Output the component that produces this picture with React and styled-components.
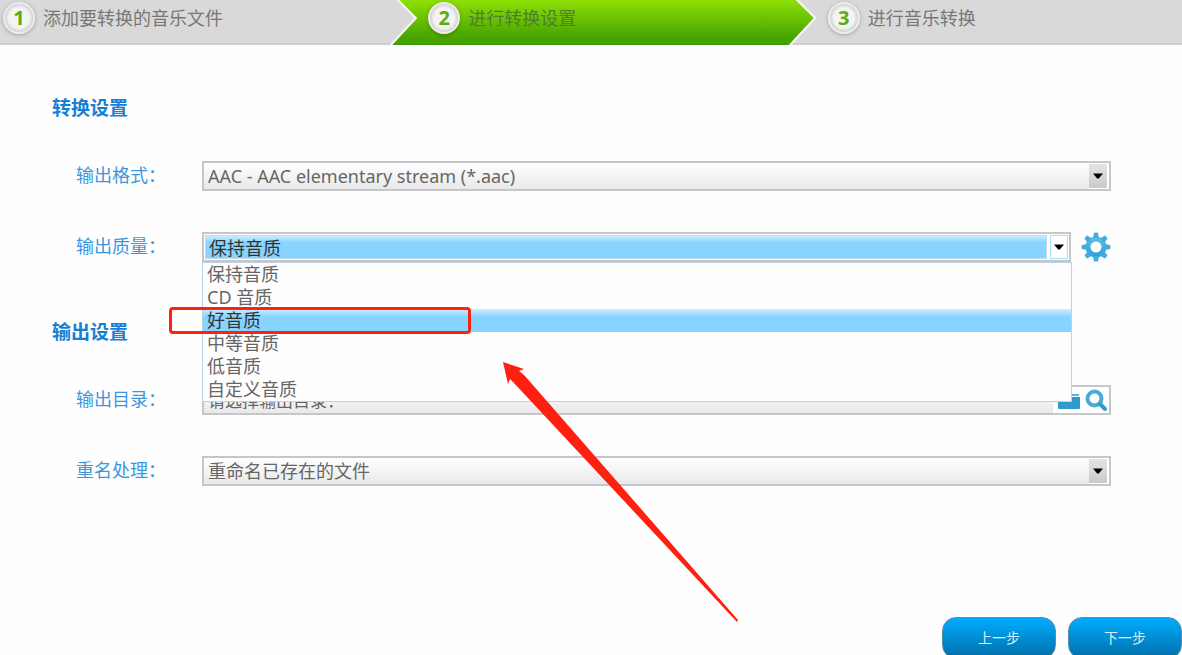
import React, { useState } from "react";
import styled, { createGlobalStyle, css } from "styled-components";

const steps = ["添加要转换的音乐文件", "进行转换设置", "进行音乐转换"];
const qualities = ["保持音质", "CD 音质", "好音质", "中等音质", "低音质", "自定义音质"];

const GearIcon = () => (
  <svg width="30" height="30" viewBox="0 0 30 30" aria-hidden="true">
    <defs>
      <linearGradient id="gear" x1="0" y1="0" x2="0" y2="1">
        <stop offset="0" stopColor="#62bde8" />
        <stop offset="1" stopColor="#2ba0d8" />
      </linearGradient>
    </defs>
    <path
      fill="url(#gear)"
      fillRule="evenodd"
      d="M15 4.5a10.5 10.5 0 1 0 0 21a10.5 10.5 0 0 0 0-21zM15 9.5a5.5 5.5 0 1 1 0 11a5.5 5.5 0 0 1 0-11z"
    />
    {[0, 45, 90, 135, 180, 225, 270, 315].map((angle) => (
      <path key={angle} fill="#43ace0" d="M12 6L12.9 .8Q15 .2 17.1 .8L18 6z" transform={`rotate(${angle} 15 15)`} />
    ))}
  </svg>
);

const FolderIcon = () => (
  <svg width="24" height="20" viewBox="0 0 24 20" aria-hidden="true">
    <path d="M2 2h7l2 2h11v2H2z" fill="#5cb4dc" />
    <path d="M1 7h22V18q0 1-1 1H2q-1 0-1-1z" fill="#2f9bcd" />
  </svg>
);

const SearchIcon = () => (
  <svg width="22" height="22" viewBox="0 0 22 22" aria-hidden="true">
    <circle cx="9.5" cy="9.5" r="7" fill="none" stroke="#4aa9d8" strokeWidth="4" />
    <path d="M15 15l5 5" stroke="#3a9bd0" strokeWidth="4" strokeLinecap="round" />
  </svg>
);

const DropArrow = () => (
  <svg width="10" height="6" viewBox="0 0 10 6" aria-hidden="true">
    <path d="M0 .5h10L5.8 5.5H4.2z" fill="#000" />
  </svg>
);

const App = () => {
  const [quality, setQuality] = useState("保持音质");
  const [open, setOpen] = useState(true);

  const choose = (item) => {
    setQuality(item);
    setOpen(false);
  };

  return (
    <Page>
      <GlobalStyle />
      <Steps>
        {steps.map((label, i) => (
          <Step key={label} $index={i}>
            <StepBody $index={i} $active={i === 1}>
              <Badge>{i + 1}</Badge>
              <span>{label}</span>
            </StepBody>
          </Step>
        ))}
      </Steps>

      <Form id="settings">
        <Section>
          <Title>转换设置</Title>
          <Row>
            <Label htmlFor="format">输出格式：</Label>
            <Field>
              <Select id="format">
                <option>AAC - AAC elementary stream (*.aac)</option>
              </Select>
              <ArrowBox>
                <DropArrow />
              </ArrowBox>
            </Field>
          </Row>
          <Row>
            <Label htmlFor="quality">输出质量：</Label>
            <Field $open>
              <Select
                id="quality"
                $selected
                value={quality}
                onChange={(e) => setQuality(e.target.value)}
                onMouseDown={(e) => {
                  e.preventDefault();
                  setOpen(!open);
                }}
              >
                {qualities.map((item) => (
                  <option key={item}>{item}</option>
                ))}
              </Select>
              <ArrowBox $open>
                <DropArrow />
              </ArrowBox>
              {open && (
                <Menu role="listbox" aria-label="输出质量">
                  {qualities.map((item) => (
                    <MenuItem
                      key={item}
                      role="option"
                      aria-selected={item === quality}
                      $marked={item === "好音质"}
                      onClick={() => choose(item)}
                    >
                      {item}
                    </MenuItem>
                  ))}
                  <Pointer width="236" height="262" viewBox="0 0 236 262" aria-hidden="true">
                    <path d="M0 0L21 7L16 9Q19 11 22 14L235 258L234 260L10 20L7 17L5 22z" fill="#ff2012" />
                  </Pointer>
                </Menu>
              )}
            </Field>
            <IconButton type="button" aria-label="质量设置">
              <GearIcon />
            </IconButton>
          </Row>
        </Section>

        <Section>
          <Title>输出设置</Title>
          <Row>
            <Label htmlFor="folder">输出目录：</Label>
            <Field>
              <TextInput id="folder" type="text" placeholder="请选择输出目录：" />
              <IconButton type="button" aria-label="选择目录">
                <FolderIcon />
              </IconButton>
              <IconButton type="button" aria-label="查找目录">
                <SearchIcon />
              </IconButton>
            </Field>
          </Row>
          <Row>
            <Label htmlFor="rename">重名处理：</Label>
            <Field>
              <Select id="rename">
                <option>重命名已存在的文件</option>
              </Select>
              <ArrowBox>
                <DropArrow />
              </ArrowBox>
            </Field>
          </Row>
        </Section>
      </Form>

      <Footer>
        <NavButton type="button">上一步</NavButton>
        <NavButton type="button">下一步</NavButton>
      </Footer>
    </Page>
  );
};

const GlobalStyle = createGlobalStyle`
  *, *::before, *::after {
    box-sizing: border-box;
  }

  body {
    margin: 0;
    background: #fefefe;
    font-family: "Noto Sans", "Noto Sans CJK SC", sans-serif;
    font-size: 18px;
    color: #666;
  }

  button, input, select {
    font-family: inherit;
  }
`;

const Page = styled.div`
  display: flex;
  flex-direction: column;
  height: 100vh;
  overflow: hidden;
`;

const Steps = styled.ol`
  display: grid;
  grid-template-columns: 49fr 50fr 49fr;
  flex-shrink: 0;
  margin: 0;
  padding: 0;
  list-style: none;
`;

const chevron = css`
  clip-path: polygon(0 0, calc(100% - 18px) 0, 100% 18px, calc(100% - 25px) 100%, 0 100%);
`;

/* each step lies over the start of the next one, with a white edge */
const Step = styled.li`
  position: relative;
  z-index: ${(p) => 3 - p.$index};
  background: #f6f6f6;
  ${(p) =>
    p.$index < 2 &&
    css`
      margin-right: -26px;
      ${chevron}
    `}
`;

const StepBody = styled.div`
  display: flex;
  align-items: center;
  gap: 8px;
  height: 45px;
  padding: 0 0 8px ${(p) => (p.$index ? 37 : 3)}px;
  line-height: 24px;
  color: ${(p) => (p.$active ? "#4f7f2c" : "#777")};
  background: ${(p) => (p.$active ? "linear-gradient(#8fe006, #48a500 85%)" : "#d9d9d9")};
  border-bottom: 2px solid ${(p) => (p.$active ? "#3f9a10" : "#cfcfcf")};
  ${(p) =>
    p.$index < 2 &&
    css`
      margin-right: 3px;
      ${chevron}
    `}
`;

const Badge = styled.b`
  display: flex;
  align-items: center;
  justify-content: center;
  width: 32px;
  height: 32px;
  border: 2px solid #ececec;
  border-radius: 50%;
  background: radial-gradient(#f4f4f4 50%, #d0d0d0 72%);
  box-shadow: 0 1px 4px rgba(0, 0, 0, 0.25);
  font-family: "Open Sans", sans-serif;
  font-size: 20px;
  line-height: 24px;
  color: #5aae14;
`;

const Form = styled.form`
  display: flex;
  flex-direction: column;
  gap: 58px;
  padding: 51px 71px 0 52px;
`;

const Section = styled.section`
  display: flex;
  flex-direction: column;
  gap: 41px;
`;

const Title = styled.h2`
  margin: 0;
  font-size: 19px;
  line-height: 24px;
  color: #157fd6;
`;

const Row = styled.div`
  display: flex;
  align-items: center;
  height: 30px;
  gap: 10px;
  padding-left: 24px;
`;

const Label = styled.label`
  width: 116px;
  padding-bottom: 2px;
  line-height: 24px;
  color: #3d95de;
`;

const Field = styled.div`
  position: relative;
  display: flex;
  flex: 1;
  align-items: center;
  height: 30px;
  padding: ${(p) => (p.$open ? "1px" : "0 2px 0 0")};
  border: 2px solid #c6c6ca;
  background: #fff;
`;

const controlStyle = css`
  flex: 1;
  min-width: 0;
  height: 26px;
  margin: 0;
  padding: 0 4px;
  border: 0;
  border-radius: 0;
  outline: 0;
  background: linear-gradient(#fff, #e9e9e9);
  color: #666;
`;

const Select = styled.select`
  ${controlStyle}
  appearance: none;
  font-size: 18px;
  ${(p) =>
    p.$selected &&
    css`
      height: 24px;
      padding: 0 3px;
      background: linear-gradient(#c9ecff, #86d4ff 30%);
      border: 1px solid #c4dcea;
      color: #333;
    `}
`;

const TextInput = styled.input`
  ${controlStyle}
  font-size: 17px;

  &::placeholder {
    color: #666;
    opacity: 1;
  }
`;

const ArrowBox = styled.span`
  display: flex;
  align-items: center;
  justify-content: center;
  width: 18px;
  height: 24px;
  pointer-events: none;
  background: linear-gradient(#e4e4e4, #cacaca);
  ${(p) =>
    p.$open &&
    css`
      margin-left: 3px;
      border: 1px solid #a9dffa;
      background: #fff;
    `}
`;

const Menu = styled.ul`
  position: absolute;
  z-index: 2;
  top: 28px;
  left: -2px;
  right: -3px;
  margin: 0;
  padding: 0;
  list-style: none;
  border: 1px solid #bcd2e4;
  background: #fefefe;
`;

const MenuItem = styled.li`
  height: 23px;
  padding-left: 4px;
  line-height: 23px;
  cursor: default;
  ${(p) =>
    p.$marked &&
    css`
      position: relative;
      background: linear-gradient(#cdeeff, #86d4ff 35%);
      color: #333;

      &::after {
        content: "";
        position: absolute;
        top: -2px;
        left: -34px;
        width: 302px;
        height: 27px;
        border: 3px solid #ff2012;
        border-radius: 4px;
      }
    `}
`;

const Pointer = styled.svg`
  position: absolute;
  top: 99px;
  left: 300px;
  pointer-events: none;
`;

const IconButton = styled.button`
  display: flex;
  align-items: center;
  padding: 0 0 0 4px;
  border: 0;
  background: none;
  cursor: pointer;

  ${Row} > & {
    padding: 0;
  }
`;

const Footer = styled.footer`
  display: flex;
  flex-shrink: 0;
  justify-content: flex-end;
  gap: 12px;
  padding-top: 131px;
`;

const NavButton = styled.button`
  width: 114px;
  height: 42px;
  padding: 0;
  border: 1px solid #5590a8;
  border-radius: 14px;
  background: linear-gradient(#00acff, #006fa8);
  font-size: 14px;
  line-height: 20px;
  color: #d8f0ff;
  cursor: pointer;
`;

export default App;
